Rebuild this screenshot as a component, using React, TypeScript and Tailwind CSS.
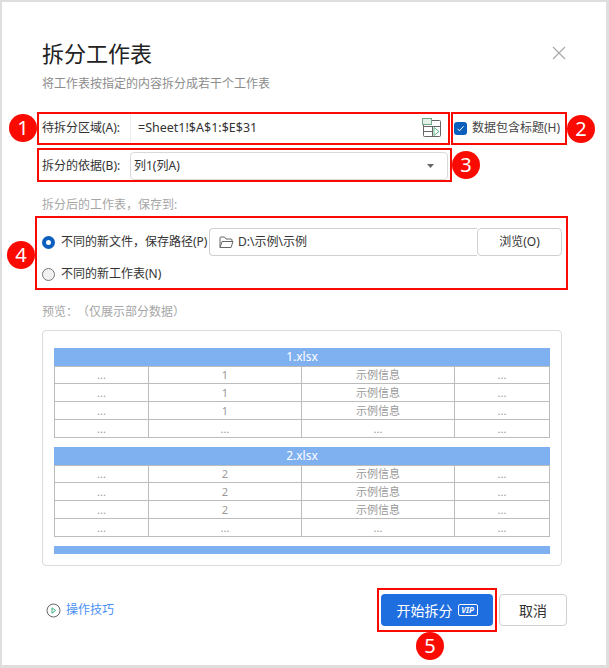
const font = { fontFamily: '"Noto Sans", "Noto Sans CJK SC", sans-serif' }

function PreviewTable({ title, value }: { title: string; value: string }) {
  const rows = [
    ['...', value, '示例信息', '...'],
    ['...', value, '示例信息', '...'],
    ['...', value, '示例信息', '...'],
    ['...', '...', '...', '...']
  ]
  return (
    <div className="w-[496px] shrink-0">
      <div className="h-[18px] bg-[#7fb0f0] text-center text-[12px] leading-[18px] text-white">{title}</div>
      <table className="w-[495px] table-fixed border-collapse">
        <colgroup>
          <col className="w-[94px]" />
          <col className="w-[153px]" />
          <col className="w-[153px]" />
          <col className="w-[95px]" />
        </colgroup>
        <tbody>
          {rows.map((row, i) => (
            <tr key={i} className={i === 0 ? 'h-[17px]' : 'h-[18px]'}>
              {row.map((cell, j) => (
                <td key={j} className="border border-[#bcbcbc] p-0 pb-[1px] text-center text-[11px] leading-[15px] text-[#999999]">
                  {cell}
                </td>
              ))}
            </tr>
          ))}
        </tbody>
      </table>
    </div>
  )
}

function Badge({ n, className }: { n: number; className: string }) {
  return (
    <div className={`absolute flex h-[28px] w-[28px] items-center justify-center rounded-full bg-[#fb0a02] text-[20px] text-white ${className}`}>
      {n}
    </div>
  )
}

export default function App() {
  return (
    <div className="relative h-[668px] w-[609px] overflow-hidden bg-[#dedede] pb-[3px] pl-[2px] pr-[3px] pt-[2px]" style={font}>
      <div className="flex h-[663px] w-[604px] flex-col bg-white pl-[40px] pr-[39px] text-[12px] text-[#333333]">
        <div className="mt-[35px] flex items-start justify-between">
          <h1 className="text-[22px] leading-[32px] text-[#222222]">拆分工作表</h1>
          <svg className="mr-[1px] mt-[9px]" width="14" height="14" viewBox="0 0 14 14" fill="none" stroke="#a6a6a6" strokeWidth="1.1">
            <path d="M1 1l12 12M13 1L1 13" />
          </svg>
        </div>
        <p className="mt-[5px] leading-[20px] text-[#8c8c8c]">将工作表按指定的内容拆分成若干个工作表</p>

        <div className="mt-[20px] flex h-[28px] items-center">
          <span className="w-[88px] shrink-0 whitespace-nowrap">待拆分区域(A):</span>
          <div className="flex h-[28px] w-[318px] shrink-0 items-center justify-between border-l border-[#eeeeee] pl-[7px] pr-[6px]">
            <span className="text-[12.5px]">=Sheet1!$A$1:$E$31</span>
            <svg width="20" height="20" viewBox="0 0 20 20" fill="none">
              <rect x="1.500" y="2.500" width="17" height="16" rx="1" stroke="#666666" />
              <path d="M1.500 8.500h17M1.500 13.500h9M10.500 8.500v10" stroke="#666666" />
              <rect x="0.500" y="0.500" width="9" height="6" fill="#e4f0e8" stroke="#6fa98a" />
              <path d="M12 9.500l5 4-5 4z" fill="#ffffff" stroke="#5bb585" />
            </svg>
          </div>
          <div className="ml-[6px] flex items-center whitespace-nowrap">
            <span className="flex h-[13px] w-[13px] items-center justify-center rounded-[3px] bg-[#0a5fbd]">
              <svg width="9" height="9" viewBox="0 0 9 9" fill="none" stroke="#ffffff" strokeWidth="1">
                <path d="M1.500 4.800l2 2 4-4.500" />
              </svg>
            </span>
            <span className="ml-[5px] text-[#444444]">数据包含标题(H)</span>
          </div>
        </div>

        <div className="mt-[10px] flex h-[28px] items-center">
          <span className="w-[88px] shrink-0 whitespace-nowrap">拆分的依据(B):</span>
          <div className="flex h-[28px] w-[318px] shrink-0 items-center justify-between rounded-[4px] border border-[#d9d9d9] pl-[3px] pr-[13px]">
            <span>列1(列A)</span>
            <svg width="7" height="4" viewBox="0 0 7 4">
              <path d="M0 0h7L3.500 4z" fill="#666666" />
            </svg>
          </div>
        </div>

        <p className="mt-[15px] leading-[20px] text-[#a6a6a6]">拆分后的工作表，保存到:</p>

        <div className="mt-[13px] flex h-[28px] items-center">
          <span className="box-border h-[13px] w-[13px] shrink-0 rounded-full border-[4px] border-[#0a5fbd] bg-white" />
          <span className="ml-[6px] w-[148px] shrink-0 whitespace-nowrap">不同的新文件，保存路径(P)</span>
          <div className="flex h-[28px] w-[268px] shrink-0 items-center rounded-l-[4px] border border-r-0 border-[#d0d0d0] pl-[9px]">
            <svg width="15" height="13" viewBox="0 0 15 13" fill="none" stroke="#666666">
              <path d="M1 11.500V2a1 1 0 0 1 1-1h3.500l1.500 2h5a1 1 0 0 1 1 1v1.500M1 11.500l2-6h11l-2 6z" />
            </svg>
            <span className="ml-[4px]">D:\示例\示例</span>
          </div>
          <button className="h-[28px] w-[85px] shrink-0 rounded-[4px] border border-[#d0d0d0] text-[12px]">浏览(O)</button>
        </div>

        <div className="mt-[6px] flex h-[24px] items-center">
          <span className="h-[13px] w-[13px] shrink-0 rounded-full border border-[#777777] bg-[#f2f2f2]" />
          <span className="ml-[6px] whitespace-nowrap">不同的新工作表(N)</span>
        </div>

        <p className="mt-[16px] leading-[20px] text-[#a6a6a6]">
          预览：<span className="ml-[5px]">（仅展示部分数据）</span>
        </p>

        <div className="mt-[8px] flex h-[236px] w-[520px] flex-col gap-[9px] overflow-hidden rounded-[4px] border border-[#dcdcdc] pl-[11px] pt-[17px]">
          <PreviewTable title="1.xlsx" value="1" />
          <PreviewTable title="2.xlsx" value="2" />
          <div className="h-[8px] w-[496px] shrink-0 bg-[#7fb0f0]" />
        </div>

        <div className="mt-[28px] flex h-[32px] items-center">
          <svg className="ml-[4px] shrink-0" width="15" height="15" viewBox="0 0 15 15" fill="none">
            <circle cx="7.500" cy="7.500" r="6.500" stroke="#666666" />
            <path d="M6 4.800l3.500 2.700L6 10.200z" stroke="#34b37e" />
          </svg>
          <span className="ml-[5px] whitespace-nowrap text-[#4a90f5]">操作技巧</span>
          <button className="ml-[267px] flex h-[32px] w-[112px] shrink-0 items-center justify-center rounded-[4px] bg-[#1f6ee0] text-[14px] text-white">
            开始拆分
            <span className="ml-[5px] flex h-[12px] w-[20px] items-center justify-center rounded-[2px] border border-white text-[8px] font-bold italic leading-none">
              VIP
            </span>
          </button>
          <button className="ml-[6px] h-[32px] w-[68px] shrink-0 rounded-[4px] border border-[#cfcfcf] text-[14px]">取消</button>
        </div>
      </div>

      {/* Annotation overlays */}
      <div className="absolute left-[37px] top-[112px] h-[33px] w-[413px] border-2 border-[#fb0a02]" />
      <div className="absolute left-[451px] top-[112px] h-[33px] w-[116px] border-2 border-[#fb0a02]" />
      <div className="absolute left-[37px] top-[148px] h-[34px] w-[415px] border-2 border-[#fb0a02]" />
      <div className="absolute left-[35px] top-[216px] h-[74px] w-[533px] border-2 border-[#fb0a02]" />
      <div className="absolute left-[377px] top-[588px] h-[44px] w-[120px] border-2 border-[#fb0a02]" />
      <Badge n={1} className="left-[9px] top-[114px]" />
      <Badge n={2} className="left-[567px] top-[115px]" />
      <Badge n={3} className="left-[452px] top-[151px]" />
      <Badge n={4} className="left-[7px] top-[241px]" />
      <Badge n={5} className="left-[416px] top-[632px]" />
    </div>
  )
}
